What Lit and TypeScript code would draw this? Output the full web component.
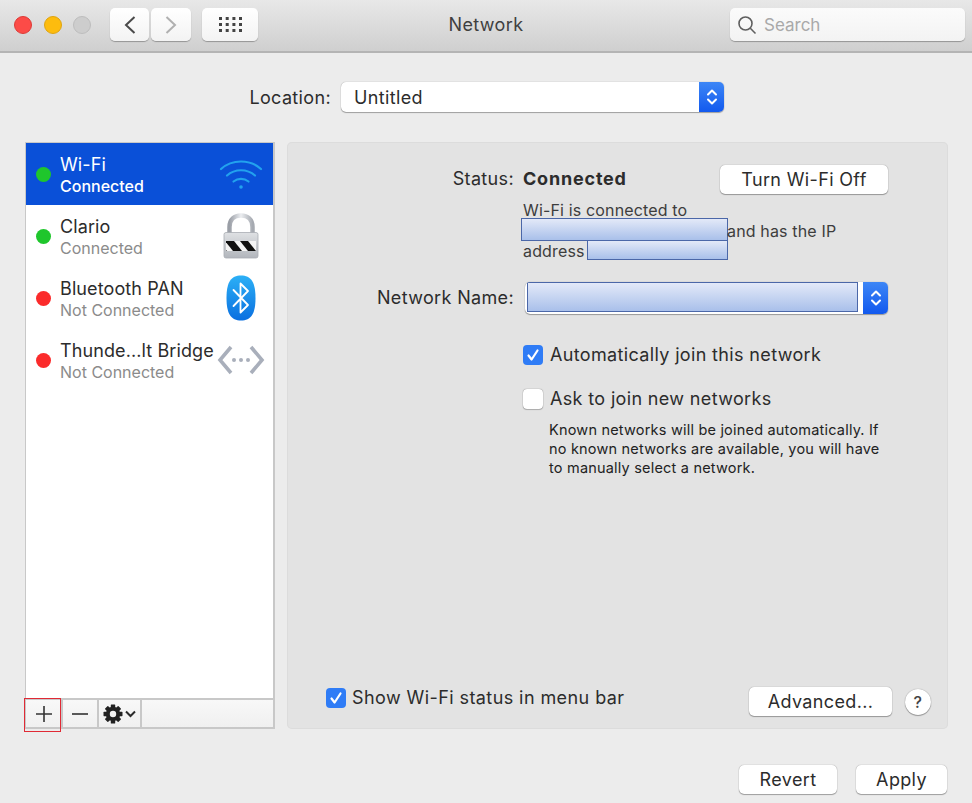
import { LitElement, html, css, svg } from 'lit';
import { customElement } from 'lit/decorators.js';

const updown = html`<svg width="12" height="20" viewBox="0 0 12 20" fill="none" stroke="#fff" stroke-width="2" stroke-linecap="round" stroke-linejoin="round"><path d="M2 7.5 6 3.5l4 4"/><path d="M2 12.5l4 4 4-4"/></svg>`;
const check = html`<svg width="14" height="14" viewBox="0 0 14 14" fill="none" stroke="#fff" stroke-width="2.2" stroke-linecap="round" stroke-linejoin="round"><path d="M2.5 7.5 5.6 11.5 11.5 2.5"/></svg>`;

const wifiIcon = html`<svg width="44" height="36" viewBox="0 0 44 36" fill="none" stroke="#22a2ee" stroke-linecap="round">
  <path d="M2 13C13 3 31 3 42 13" stroke-width="2.2"/>
  <path d="M8 19.500C16 12.500 28 12.500 36 19.500" stroke-width="2.2"/>
  <path d="M14.500 25.500C19 22 25 22 29.500 25.500" stroke-width="2.200"/>
  <circle cx="22" cy="31" r="1.800" fill="#22a2ee" stroke="none"/>
</svg>`;

const lockIcon = html`<svg width="36" height="46" viewBox="0 0 36 46">
  <defs>
    <linearGradient id="sh" x1="0" x2="1" y1="0" y2="0"><stop offset="0" stop-color="#9a9ea6"/><stop offset=".5" stop-color="#eceef1"/><stop offset="1" stop-color="#a6aab1"/></linearGradient>
    <linearGradient id="bd" x1="0" x2="0" y1="0" y2="1"><stop offset="0" stop-color="#dfe1e4"/><stop offset="1" stop-color="#b2b6bc"/></linearGradient>
    <clipPath id="st"><rect x="3" y="28" width="30" height="10"/></clipPath>
  </defs>
  <path d="M6.500 21V14C6.500 6.500 11.500 2.500 18 2.500S29.500 6.500 29.500 14V21" fill="none" stroke="url(#sh)" stroke-width="4.500"/>
  <rect x="1" y="19.500" width="34" height="25.500" rx="2" fill="url(#bd)" stroke="#a8acb3" stroke-width=".8"/>
  <rect x="3" y="28" width="30" height="10" fill="#f4f4f4"/>
  <g clip-path="url(#st)" fill="#111">
    <path d="M2 28h9l8 10h-9z"/><path d="M17 28h8l8 10h-8z"/><path d="M0 34l4 4h-4z"/>
  </g>
</svg>`;

const btIcon = html`<svg width="30" height="46" viewBox="0 0 30 46">
  <defs><linearGradient id="bt" x1="0" x2="0" y1="0" y2="1"><stop offset="0" stop-color="#2cb0f6"/><stop offset="1" stop-color="#0a6fe0"/></linearGradient></defs>
  <path d="M15 .5C25 .5 29.500 7 29.500 23S25 45.500 15 45.500 .5 39 .5 23 5 .5 15 .5z" fill="url(#bt)"/>
  <path d="M7.500 15 22 30 14.500 37.500V8.500L22 16 7.500 31" fill="none" stroke="#fff" stroke-width="1.800" stroke-linejoin="round" stroke-linecap="round"/>
</svg>`;

const bridgeIcon = html`<svg width="48" height="32" viewBox="0 0 48 32" fill="none" stroke="#a9afbb" stroke-width="3.600" stroke-linejoin="miter">
  <path d="M14 3 3 16l11 13"/><path d="M34 3l11 13-11 13"/>
  <g fill="#a9afbb" stroke="none"><circle cx="17" cy="16" r="2"/><circle cx="24" cy="16" r="2"/><circle cx="31" cy="16" r="2"/></g>
</svg>`;

const gearTeeth = [0, 45, 90, 135, 180, 225, 270, 315].map(
  (a) => svg`<rect x="7.800" y="0.500" width="4.400" height="5" rx=".6" transform="rotate(${a} 10 10)"/>`
);
const gearIcon = html`<svg width="20" height="20" viewBox="0 0 20 20" fill="#222">
  ${gearTeeth}
  <circle cx="10" cy="10" r="5.200" fill="none" stroke="#222" stroke-width="4"/>
</svg>`;

type Service = { name: string; sub: string; on: boolean; icon: unknown; active?: boolean };

const services: Service[] = [
  { name: 'Wi-Fi', sub: 'Connected', on: true, icon: wifiIcon, active: true },
  { name: 'Clario', sub: 'Connected', on: true, icon: lockIcon },
  { name: 'Bluetooth PAN', sub: 'Not Connected', on: false, icon: btIcon },
  { name: 'Thunde...lt Bridge', sub: 'Not Connected', on: false, icon: bridgeIcon },
];

@customElement('app-root')
export class AppRoot extends LitElement {
  static styles = css`
    :host {
      display: flex;
      flex-direction: column;
      width: 972px;
      height: 803px;
      background: #ececec;
      color: #2c2c2c;
      font-family: 'Inter', 'Liberation Sans', sans-serif;
      font-size: 18px;
      letter-spacing: 0.35px;
      overflow: hidden;
    }
    .titlebar {
      display: grid;
      grid-template-columns: 1fr auto 1fr;
      align-items: center;
      height: 43px;
      flex: none;
      padding-top: 8px;
      box-sizing: content-box;
      background: linear-gradient(#e8e8e8, #cfcfcf);
      border-bottom: 2px solid #b4b4b4;
    }
    .titlebar > * { align-self: start; }
    .tb-left {
      display: flex;
      align-items: center;
      padding-left: 14px;
    }
    .light {
      width: 18px;
      height: 18px;
      border-radius: 50%;
      margin-right: 11.500px;
      box-sizing: border-box;
    }
    .red { background: #fc4b47; border: 1px solid #dd3a36; }
    .yellow { background: #fdbc0e; border: 1px solid #dfa410; }
    .grey { background: #cdcdcd; border: 1px solid #bdbdbd; margin-right: 19px; }
    .tool {
      display: flex;
      align-items: center;
      justify-content: center;
      height: 33px;
      box-sizing: border-box;
      background: linear-gradient(#ffffff, #f3f3f3);
      border-radius: 5px;
      box-shadow: 0 1px 1px rgba(0, 0, 0, 0.3);
    }
    .back { width: 39px; margin-right: 2px; }
    .fwd { width: 40px; margin-right: 11px; }
    .apps { width: 56px; }
    .title {
      line-height: 33px;
      color: #3f3f3f;
      text-align: center;
    }
    .tb-right {
      display: flex;
      justify-content: flex-end;
      padding-right: 7px;
    }
    .search {
      display: flex;
      align-items: center;
      gap: 7px;
      width: 235px;
      height: 33px;
      padding-left: 7px;
      box-sizing: border-box;
      background: linear-gradient(#fbfbfb, #f3f3f3);
      border-radius: 5px;
      box-shadow: 0 1px 1px rgba(0, 0, 0, 0.3);
      color: #a9a9a9;
      font-size: 17px;
      letter-spacing: 0;
    }
    .location {
      display: grid;
      grid-template-columns: 331px 383px;
      column-gap: 10px;
      align-items: center;
      margin-top: 29px;
      height: 30px;
      flex: none;
    }
    .location label { text-align: right; }
    .select {
      display: flex;
      align-items: stretch;
      justify-content: space-between;
      height: 30px;
      box-sizing: border-box;
      background: #fff;
      border-radius: 5px;
      box-shadow: 0 0 1px rgba(0, 0, 0, 0.4), 0 1px 1px rgba(0, 0, 0, 0.3);
      overflow: hidden;
    }
    .select .value { padding-left: 13px; align-self: center; }
    .stepper {
      display: flex;
      align-items: center;
      justify-content: center;
      width: 25px;
      flex: none;
      background: linear-gradient(#3d86f6, #1259ee);
    }
    .content {
      display: grid;
      grid-template-columns: 250px 661px;
      column-gap: 12px;
      margin: 30px 0 0 25px;
      height: 587px;
      flex: none;
    }
    .sidebar {
      position: relative;
      display: flex;
      flex-direction: column;
      box-sizing: border-box;
      background: #fff;
      border: 2px solid #c8c8c8;
      border-left-width: 1px;
    }
    .list { flex: 1; }
    .row {
      display: flex;
      align-items: center;
      height: 62px;
      padding: 0 8px 0 10px;
      box-sizing: border-box;
    }
    .row.active {
      background: #0a50d8;
      color: #fff;
      margin-top: -1px;
    }
    .dot {
      width: 15px;
      height: 15px;
      border-radius: 50%;
      margin-right: 9px;
      flex: none;
    }
    .dot.on { background: #1fc62c; }
    .dot.off { background: #fb2b2b; }
    .labels { flex: 1; min-width: 0; white-space: nowrap; padding-top: 3px; }
    .name { line-height: 22px; letter-spacing: 0.1px; }
    .sub { font-size: 16px; line-height: 21px; color: #8b8b8b; letter-spacing: 0; }
    .active .sub { color: #fff; font-weight: 500; }
    .svc-icon {
      width: 48px;
      flex: none;
      display: flex;
      justify-content: center;
      align-items: center;
    }
    .toolbar {
      display: flex;
      height: 27px;
      flex: none;
      background: linear-gradient(#f8f8f8, #f0f0f0);
      border-top: 2px solid #c8c8c8;
    }
    .tbtn {
      display: flex;
      align-items: center;
      justify-content: center;
      gap: 2px;
      border-right: 2px solid #c8c8c8;
      box-sizing: border-box;
    }
    .plus { width: 37px; }
    .minus { width: 36px; }
    .gear { width: 43px; }
    .highlight {
      position: absolute;
      left: -2px;
      bottom: -5px;
      width: 37px;
      height: 34px;
      box-sizing: border-box;
      border: 1px solid #e02a35;
    }
    .panel {
      display: flex;
      flex-direction: column;
      background: #e3e3e3;
      border-radius: 5px;
      box-shadow: inset 0 0 0 1px #dcdcdc;
      padding: 23px 60px 13px 0;
    }
    .form {
      display: grid;
      grid-template-columns: 227px 1fr;
      column-gap: 9px;
      align-items: center;
    }
    .form .lbl { text-align: right; }
    .form .lbl.st { padding-bottom: 3px; }
    .status {
      display: flex;
      align-items: center;
      justify-content: space-between;
      height: 29px;
    }
    .status b { font-weight: 700; letter-spacing: 0.8px; padding-bottom: 3px; }
    .btn {
      display: flex;
      align-items: center;
      justify-content: center;
      height: 29px;
      box-sizing: border-box;
      background: #fff;
      border-radius: 5px;
      box-shadow: 0 0 1px rgba(0, 0, 0, 0.45), 0 1px 1px rgba(0, 0, 0, 0.3);
      color: #2c2c2c;
    }
    .turn { width: 168px; }
    .desc {
      grid-column: 2;
      margin-top: 5px;
      font-size: 16px;
      letter-spacing: 0.15px;
      color: #3d3d3d;
    }
    .line {
      display: flex;
      align-items: center;
      height: 20.500px;
      white-space: nowrap;
    }
    .line .t { padding-top: 2px; }
    .mask {
      flex: none;
      box-sizing: border-box;
      background: linear-gradient(#e3e9f8, #a9c0ea);
      border: 1px solid #4b67a8;
    }
    .mask-a { width: 207px; height: 23px; margin-left: -2px; margin-right: -1px; }
    .mask-b { width: 141px; height: 20px; margin-left: 2px; }
    .name-lbl { margin-top: 21px; }
    .name-select {
      position: relative;
      margin-top: 21px;
      margin-left: 2px;
      height: 32px;
      border-radius: 5px;
    }
    .name-select .mask {
      position: absolute;
      left: 2px;
      top: 0;
      width: 331px;
      height: 30px;
    }
    .opt {
      grid-column: 2;
      display: flex;
      align-items: center;
      gap: 7px;
      height: 20px;
      white-space: nowrap;
    }
    .opt.first { margin-top: 31px; }
    .opt.second { margin-top: 24px; }
    .box {
      display: flex;
      align-items: center;
      justify-content: center;
      width: 20px;
      height: 20px;
      flex: none;
      box-sizing: border-box;
      border-radius: 4px;
      background: #fff;
      box-shadow: 0 0 1px rgba(0, 0, 0, 0.6), 0 1px 1px rgba(0, 0, 0, 0.2);
    }
    .box.checked { background: #2f7cf6; box-shadow: none; }
    .hint {
      grid-column: 2;
      margin: 11px 0 0 26px;
      font-size: 14.500px;
      letter-spacing: 0.2px;
      line-height: 19px;
      color: #222;
    }
    .panel-foot {
      display: flex;
      align-items: center;
      margin-top: auto;
      padding-left: 39px;
      margin-right: -43px;
    }
    .panel-foot .opt { gap: 6px; margin-bottom: 8px; letter-spacing: 0.42px; }
    .adv { width: 143px; margin-left: auto; margin-right: 13px; }
    .help {
      display: flex;
      align-items: center;
      justify-content: center;
      width: 26px;
      height: 26px;
      border-radius: 50%;
      background: #fff;
      box-shadow: 0 0 1px rgba(0, 0, 0, 0.45), 0 1px 1px rgba(0, 0, 0, 0.3);
      font-size: 16px;
      font-weight: 500;
      color: #444;
    }
    .footer {
      display: flex;
      justify-content: flex-end;
      gap: 19px;
      padding: 36px 25px 0 0;
    }
    .revert { width: 98px; }
    .apply { width: 91px; }
  `;

  render() {
    return html`
      <div class="titlebar">
        <div class="tb-left">
          <span class="light red"></span>
          <span class="light yellow"></span>
          <span class="light grey"></span>
          <div class="tool back">
            <svg width="14" height="20" viewBox="0 0 14 20" fill="none" stroke="#4a4a4a" stroke-width="2"><path d="M11.500 2 3 10l8.500 8"/></svg>
          </div>
          <div class="tool fwd">
            <svg width="14" height="20" viewBox="0 0 14 20" fill="none" stroke="#b0b0b0" stroke-width="2"><path d="M2.500 2 11 10l-8.500 8"/></svg>
          </div>
          <div class="tool apps">
            <svg width="23" height="15" viewBox="0 0 23 15" fill="#444">
              ${[0, 6, 12].map((y) =>
                [0, 6.7, 13.4, 20].map((x) => svg`<rect x=${x} y=${y} width="3" height="3"/>`)
              )}
            </svg>
          </div>
        </div>
        <div class="title">Network</div>
        <div class="tb-right">
          <div class="search">
            <svg width="20" height="20" viewBox="0 0 20 20" fill="none" stroke="#5f5f5f" stroke-width="1.600"><circle cx="8.500" cy="8.500" r="6.500"/><path d="M13.300 13.300 18.500 18.500"/></svg>
            <span>Search</span>
          </div>
        </div>
      </div>

      <div class="location">
        <label>Location:</label>
        <div class="select">
          <span class="value">Untitled</span>
          <span class="stepper">${updown}</span>
        </div>
      </div>

      <div class="content">
        <div class="sidebar">
          <div class="list">
            ${services.map(
              (s) => html`
                <div class="row ${s.active ? 'active' : ''}">
                  <span class="dot ${s.on ? 'on' : 'off'}"></span>
                  <div class="labels">
                    <div class="name">${s.name}</div>
                    <div class="sub">${s.sub}</div>
                  </div>
                  <div class="svc-icon">${s.icon}</div>
                </div>
              `
            )}
          </div>
          <div class="toolbar">
            <div class="tbtn plus">
              <svg width="18" height="18" viewBox="0 0 18 18" stroke="#333" stroke-width="1.600"><path d="M9 1v16M1 9h16"/></svg>
            </div>
            <div class="tbtn minus">
              <svg width="18" height="18" viewBox="0 0 18 18" stroke="#333" stroke-width="1.600"><path d="M1 9h16"/></svg>
            </div>
            <div class="tbtn gear">
              ${gearIcon}
              <svg width="11" height="8" viewBox="0 0 11 8" fill="none" stroke="#2b2b2b" stroke-width="2"><path d="M1 1.500 5.500 6 10 1.500"/></svg>
            </div>
          </div>
          <div class="highlight"></div>
        </div>

        <div class="panel">
          <div class="form">
            <div class="lbl st">Status:</div>
            <div class="status">
              <b>Connected</b>
              <div class="btn turn">Turn Wi-Fi Off</div>
            </div>
            <div class="desc">
              <div class="line"><span class="t">Wi-Fi is connected to</span></div>
              <div class="line"><span class="mask mask-a"></span><span class="t">and has the IP</span></div>
              <div class="line"><span class="t">address</span><span class="mask mask-b"></span></div>
            </div>
            <div class="lbl name-lbl">Network Name:</div>
            <div class="select name-select">
              <span class="mask"></span>
              <span></span>
              <span class="stepper">${updown}</span>
            </div>
            <div class="opt first">
              <span class="box checked">${check}</span>
              <span>Automatically join this network</span>
            </div>
            <div class="opt second">
              <span class="box"></span>
              <span>Ask to join new networks</span>
            </div>
            <div class="hint">
              Known networks will be joined automatically. If<br />
              no known networks are available, you will have<br />
              to manually select a network.
            </div>
          </div>
          <div class="panel-foot">
            <div class="opt">
              <span class="box checked">${check}</span>
              <span>Show Wi-Fi status in menu bar</span>
            </div>
            <div class="btn adv">Advanced...</div>
            <div class="help">?</div>
          </div>
        </div>
      </div>

      <div class="footer">
        <div class="btn revert">Revert</div>
        <div class="btn apply">Apply</div>
      </div>
    `;
  }
}
